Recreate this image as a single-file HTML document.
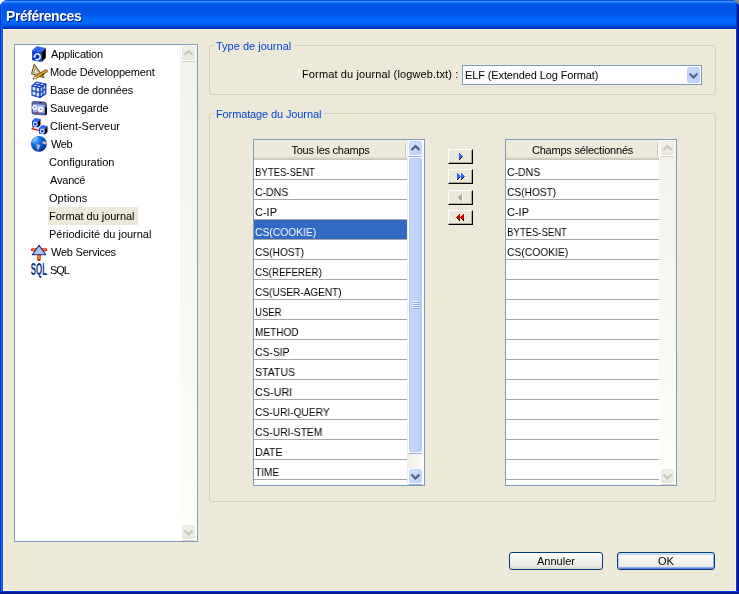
<!DOCTYPE html>
<html><head><meta charset="utf-8">
<style>
html,body{margin:0;padding:0;width:739px;height:594px;overflow:hidden;background:#fff;}
*{box-sizing:border-box;}
body{font-family:"Liberation Sans",sans-serif;font-size:11px;color:#000;position:relative;}
.a{position:absolute;}
.t,.ti,.rt,.glbl{will-change:transform;}
.t{position:absolute;white-space:nowrap;line-height:13px;}
#corner{left:729px;top:0;width:10px;height:10px;background:#8c8a7e;}
#win{left:0;top:0;width:739px;height:594px;border-radius:8px 8px 0 0;overflow:hidden;background:#0831d9;}
#title{left:0;top:0;width:739px;height:29px;
background:linear-gradient(180deg,#0a4fe4 0px,#0a4fe4 1px,#3d92ff 1px,#3d92ff 2px,#1b7bff 2px,#1b7bff 3px,#0066f5 3px,#005ceb 4px,#0055e5 5px,#0053e3 9px,#0056e6 14px,#005cf0 16px,#0066fa 18px,#0068ff 19px,#0068ff 23px,#0062f5 24px,#005aee 25px,#004cdc 26px,#003cc8 27px,#0032b8 28px,#0032b8 29px);}
#fl{left:0;top:4px;width:3px;height:590px;box-shadow:inset 1px 0 #0831d9,inset 2px 0 #166aee;background:#0855dd;}
#fr{left:736px;top:4px;width:3px;height:590px;background:#001ea0;box-shadow:inset -1px 0 #00138c,inset 1px 0 #003bda;}
#fb{left:0;top:591px;width:739px;height:3px;background:#001ea0;box-shadow:inset 0 -1px #00138c,inset 0 1px #003bda;}
#client{left:3px;top:29px;width:733px;height:562px;background:#ece9d8;border:1px solid #fcf5da;}
#ttxt{left:6px;top:8px;font-weight:bold;font-size:14px;letter-spacing:-0.45px;line-height:16px;color:#fff;text-shadow:1px 1px #0a1a80;}
.box{position:absolute;background:#fff;border:1px solid #7f9db9;}
.grp{position:absolute;border:1px solid #d0d0bf;border-radius:3px;}
.glbl{position:absolute;color:#0046d5;background:#ece9d8;padding:0 3px 0 2px;line-height:13px;white-space:nowrap;}
.ti{position:absolute;line-height:13px;white-space:nowrap;}
.ic{position:absolute;left:31px;width:16px;height:16px;}
.hdr{position:absolute;height:20px;background:linear-gradient(180deg,#ebeadb 0,#ebeadb 17px,#e2decd 17px,#e2decd 18px,#d6d2c2 18px,#d6d2c2 19px,#cbc7b8 19px);}
.hsep{position:absolute;width:2px;height:13px;border-left:1px solid #c7c5b2;border-right:1px solid #fff;}
.row{position:absolute;height:20px;border-bottom:1px solid #a8a8a8;}
.rt{position:absolute;line-height:13px;white-space:nowrap;}
.sb{position:absolute;width:17px;}
.btn3d{position:absolute;width:25px;height:15px;background:#ece9d8;border-left:1px solid #fff;border-top:1px solid #fff;border-right:1px solid #000;border-bottom:1px solid #000;box-shadow:inset -1px -1px #aca899;}
.xpbtn{position:absolute;height:18px;border:1px solid #003c74;border-radius:3px;background:linear-gradient(180deg,#fff 0%,#f4f4f0 40%,#ecebe6 80%,#d6d0c5 100%);}
.xpbtn.def{box-shadow:inset 0 1px #cee7ff,inset 0 2px #bcd4f6,inset 1px 0 #bcd4f6,inset -1px 0 #89adf4,inset 0 -1px #6982ee,inset 0 -2px #89adf4;}
</style></head><body>
<div class="a" id="corner"></div>
<div class="a" id="win">
  <div class="a" id="title"></div>
  <div class="a" id="fl"></div>
  <div class="a" id="fr"></div>
  <div class="a" id="fb"></div>
  <div class="a" id="client"></div>
  <div class="t" id="ttxt">Préférences</div>
</div>
<div class="box" style="left:14px;top:44px;width:184px;height:498px;"></div>
<div class="ti" style="left:51px;top:48px;letter-spacing:-0.18px">Application</div>
<div class="a" style="left:30px;top:45px;width:18px;height:18px"><svg width="18" height="18"><polygon points="2.1,5.2 6.7,1.2 15.8,3 11.8,7.3" fill="#2a66ee"/><polygon points="2.1,5.2 11.8,7.3 11.8,17 2.1,15.2" fill="#0f3ed4"/><polygon points="11.8,7.3 15.8,3 15.8,12.7 11.8,17" fill="#000"/><path d="M4.5 11 A2.9 2.9 0 1 1 5.6 14.1" fill="none" stroke="#eef2ff" stroke-width="1.5"/><path d="M2.8 11.6 L5.6 10.4 L5.4 13 Z" fill="#eef2ff"/><circle cx="7.6" cy="12" r="1.3" fill="#0a2cb8"/></svg></div>
<div class="ti" style="left:50px;top:66px;letter-spacing:-0.17px">Mode Développement</div>
<div class="a" style="left:30px;top:63px;width:18px;height:18px"><svg width="18" height="18"><polygon points="4.2,1.4 1.5,10.8 14,14.6" fill="#d8cc98" stroke="#7a6a30" stroke-width="1.2" stroke-linejoin="round"/><polygon points="4.9,5.6 3.8,9.7 9.6,11.3" fill="#fff" stroke="#a89860" stroke-width="0.9"/><path d="M5.6 14.4 L16 8" stroke="#7a4c08" stroke-width="3.4" stroke-linecap="round"/><path d="M5.8 14.2 L15.9 8.1" stroke="#e8a030" stroke-width="1.9" stroke-linecap="round"/><path d="M3.6 15.8 L5.8 14.2" stroke="#e8e0c0" stroke-width="1.8"/><path d="M3 16.3 L4.2 15.4" stroke="#404040" stroke-width="1.4"/><rect x="12.6" y="10.8" width="1.4" height="1.4" fill="#000"/></svg></div>
<div class="ti" style="left:50px;top:84px;letter-spacing:-0.17px">Base de données</div>
<div class="a" style="left:30px;top:81px;width:18px;height:18px"><svg width="18" height="18"><polygon points="2,5 6.5,1 15.8,3 10,6.8" fill="#c4e0f0" stroke="#1a44d0" stroke-width="1.2" stroke-linejoin="round"/><polygon points="2,5 10,6.8 10,16.5 2,14.2" fill="#d4ecf4" stroke="#1a44d0" stroke-width="1.2" stroke-linejoin="round"/><polygon points="10,6.8 15.8,3 15.8,12.7 10,16.5" fill="#a8cce8" stroke="#1030b8" stroke-width="1.2" stroke-linejoin="round"/><path d="M6 5.9 L6 15.35 M2 9.6 L10 11.65 M12.9 4.9 L12.9 14.6 M10 11.65 L15.8 7.85 M4.25 3 L12.9 4.9 M11.15 2 L6 5.9" stroke="#1a44d0" stroke-width="1.2" fill="none"/></svg></div>
<div class="ti" style="left:50px;top:102px;letter-spacing:-0.08px">Sauvegarde</div>
<div class="a" style="left:30px;top:99px;width:18px;height:18px"><svg width="18" height="18"><path d="M2 4 Q2 2.5 3.5 2.5 L14 3 Q16.5 3.2 16.5 6 L16.5 14.5 Q16.5 16 15 16 L3.5 15.2 Q2 15 2 13.5 Z" fill="#5866a8" stroke="#3a4680" stroke-width="0.8"/><path d="M3 5 L14.5 6 L14.5 14 L3 13 Z" fill="#9ab4ec"/><circle cx="4.6" cy="8.6" r="2.5" fill="#f4f6ff"/><circle cx="4.6" cy="8.6" r="0.8" fill="#5866a8"/><circle cx="10.6" cy="10.2" r="2.8" fill="#f4f6ff"/><circle cx="10.6" cy="10.2" r="0.8" fill="#5866a8"/><rect x="6.3" y="12.6" width="1.6" height="1.4" fill="#d01818"/><rect x="15.2" y="8" width="1.6" height="7.6" fill="#000"/><rect x="9.4" y="3.2" width="2.2" height="0.9" fill="#000"/></svg></div>
<div class="ti" style="left:50px;top:120px;letter-spacing:-0.03px">Client-Serveur</div>
<div class="a" style="left:30px;top:117px;width:18px;height:18px"><svg width="18" height="18"><path d="M4.6 9.4 L2.2 11.6 L9.5 13.6" fill="none" stroke="#c01818" stroke-width="1.2"/><polygon points="2,4 5,1 10.5,2 8,5" fill="#2a66ee"/><polygon points="2,4 8,5 8,10.5 2,9.5" fill="#0f3ed4"/><polygon points="8,5 10.5,2 10.5,8 8,10.5" fill="#000"/><circle cx="5.2" cy="7.2" r="1.9" fill="none" stroke="#e8f0ff" stroke-width="1.1"/><rect x="4.8" y="6.6" width="1.1" height="1.1" fill="#1030c0"/><polygon points="9,11 12,8 17.5,9 15,12" fill="#2a66ee"/><polygon points="9,11 15,12 15,17.5 9,16.5" fill="#0f3ed4"/><polygon points="15,12 17.5,9 17.5,15 15,17.5" fill="#000"/><circle cx="12.2" cy="14.2" r="1.9" fill="none" stroke="#e8f0ff" stroke-width="1.1"/><rect x="11.8" y="13.6" width="1.1" height="1.1" fill="#1030c0"/></svg></div>
<div class="ti" style="left:51px;top:138px;letter-spacing:-0.4px">Web</div>
<div class="a" style="left:30px;top:135px;width:18px;height:18px"><svg width="18" height="18"><defs><radialGradient id="gl" cx="32%" cy="28%" r="78%"><stop offset="0" stop-color="#4cb0f4"/><stop offset="0.45" stop-color="#0c62dc"/><stop offset="0.85" stop-color="#0a3aa8"/><stop offset="1" stop-color="#08207a"/></radialGradient></defs><circle cx="8.9" cy="8.9" r="7.9" fill="url(#gl)"/><path d="M2.2 6.5 Q3 3 6 1.6 Q8.5 1.4 8 3.2 Q6.5 4.2 6.2 6 Q4.6 7.2 2.8 8.2 Z" fill="#8cc8ec" opacity="0.75"/><path d="M6.4 9.4 Q9 8.6 10.4 10.6 Q9.4 13 8.2 15.6 L7.2 14.2 Q6.2 11.6 6.4 9.4 Z" fill="#b0bcc8" opacity="0.9"/><path d="M12.4 6.4 Q14.6 5.6 16.4 7.2 L16.4 9.2 Q14.4 9.8 12.4 8.6 Z" fill="#e4bcb4" opacity="0.9"/><rect x="10.8" y="14.6" width="1.4" height="1.2" fill="#000"/></svg></div>
<div class="ti" style="left:49px;top:156px;letter-spacing:0px">Configuration</div>
<div class="ti" style="left:50px;top:174px;letter-spacing:-0.2px">Avancé</div>
<div class="ti" style="left:49px;top:192px;letter-spacing:0.05px">Options</div>
<div class="a" style="left:48px;top:207px;width:90px;height:18px;background:#ece9d8"></div>
<div class="ti" style="left:49px;top:210px;letter-spacing:-0.04px">Format du journal</div>
<div class="ti" style="left:49px;top:228px;letter-spacing:-0.015px">Périodicité du journal</div>
<div class="ti" style="left:51px;top:246px;letter-spacing:-0.23px">Web Services</div>
<div class="a" style="left:30px;top:243px;width:18px;height:18px"><svg width="18" height="18"><path d="M2.4 6.7 L15.8 6.7" stroke="#d02010" stroke-width="3" stroke-linecap="round"/><path d="M2.4 6.7 L15.8 6.7" stroke="#f8a030" stroke-width="1.2"/><path d="M9 12 L9 16.6" stroke="#d03010" stroke-width="3.4" stroke-linecap="round"/><path d="M9 12 L9 16" stroke="#f89020" stroke-width="1.6"/><polygon points="9,2.2 2.4,11.8 15.8,11.8" fill="#a8c4f8" stroke="#20286a" stroke-width="1.1" stroke-linejoin="round"/></svg></div>
<div class="ti" style="left:50px;top:264px;letter-spacing:-1.1px">SQL</div>
<div class="a" style="left:30px;top:261px;width:18px;height:18px"><svg width="18" height="18"><text x="0.8" y="13.7" font-family="Liberation Sans" font-weight="bold" font-size="16" textLength="16.2" lengthAdjust="spacingAndGlyphs" fill="#0a2f8a">SQL</text></svg></div>
<div class="a" style="left:180px;top:45px;width:17px;height:496px;background:linear-gradient(180deg,#f3f1ec,#fefefb)"></div>
<div class="a" style="left:181px;top:45px;width:15px;height:16px;background:#fff;border-radius:2px"></div>
<div class="a" style="left:182px;top:46px;width:13px;height:14px;border-radius:2px;border:1px solid #e8e6dc;background:linear-gradient(180deg,#f2f1ea,#e9e7de);"></div>
<div class="a" style="left:182px;top:61px;width:13px;height:1px;background:#d8d5c8"></div>
<svg class="a" style="left:180px;top:45px" width="17" height="17"><path d="M4.5 10 L8.5 6 L12.5 10" fill="none" stroke="#c9c7ba" stroke-width="2.2"/></svg>
<div class="a" style="left:181px;top:524px;width:15px;height:16px;background:#fff;border-radius:2px"></div>
<div class="a" style="left:182px;top:525px;width:13px;height:14px;border-radius:2px;border:1px solid #e8e6dc;background:linear-gradient(180deg,#f2f1ea,#e9e7de);"></div>
<div class="a" style="left:182px;top:540px;width:13px;height:1px;background:#d8d5c8"></div>
<svg class="a" style="left:180px;top:524px" width="17" height="17"><path d="M4.5 6.5 L8.5 10.5 L12.5 6.5" fill="none" stroke="#c9c7ba" stroke-width="2.2"/></svg>
<div class="grp" style="left:209px;top:45px;width:507px;height:50px;"></div>
<div class="glbl" style="left:214px;top:40px">Type de journal</div>
<div class="t" style="left:302px;top:68px;letter-spacing:0.13px">Format du journal (logweb.txt) :</div>
<div class="box" style="left:462px;top:65px;width:240px;height:20px;"></div>
<div class="t" style="left:465px;top:69px;letter-spacing:-0.12px">ELF (Extended Log Format)</div>
<div class="a" style="left:687px;top:67px;width:13px;height:16px;border-radius:2px;background:linear-gradient(135deg,#d2dcf8,#b8cdfb);border:1px solid #c3d3fd"></div>
<svg class="a" style="left:687px;top:67px" width="13" height="16"><path d="M2.5 6.5 L6.5 10.5 L10.5 6.5" fill="none" stroke="#4d6185" stroke-width="2"/></svg>
<div class="grp" style="left:209px;top:113px;width:507px;height:389px;"></div>
<div class="glbl" style="left:214px;top:108px;letter-spacing:-0.12px">Formatage du Journal</div>
<div class="box" style="left:253px;top:139px;width:172px;height:347px;overflow:hidden">
<div class="hdr" style="left:0;top:0;width:153px"></div>
<div class="t" style="left:0;top:4px;width:153px;text-align:center;letter-spacing:-0.25px;">Tous les champs</div>
<div class="hsep" style="left:151px;top:3px"></div>
<div class="row" style="left:0;top:20px;width:153px"></div>
<div class="rt" style="left:1px;top:26px;transform:scaleX(0.8657);transform-origin:1px 0;">BYTES-SENT</div>
<div class="row" style="left:0;top:40px;width:153px"></div>
<div class="rt" style="left:1px;top:46px;transform:scaleX(0.9531);transform-origin:1px 0;">C-DNS</div>
<div class="row" style="left:0;top:60px;width:153px"></div>
<div class="rt" style="left:1px;top:66px;">C-IP</div>
<div class="row" style="left:0;top:80px;width:153px"></div>
<div class="a" style="left:0;top:80px;width:153px;height:19px;background:#316ac5"></div>
<div class="rt" style="left:1px;top:86px;color:#fff;transform:scaleX(0.9349);transform-origin:1px 0;">CS(COOKIE)</div>
<div class="row" style="left:0;top:100px;width:153px"></div>
<div class="rt" style="left:1px;top:106px;transform:scaleX(0.9216);transform-origin:1px 0;">CS(HOST)</div>
<div class="row" style="left:0;top:120px;width:153px"></div>
<div class="rt" style="left:1px;top:126px;transform:scaleX(0.8877);transform-origin:1px 0;">CS(REFERER)</div>
<div class="row" style="left:0;top:140px;width:153px"></div>
<div class="rt" style="left:1px;top:146px;transform:scaleX(0.9130);transform-origin:1px 0;">CS(USER-AGENT)</div>
<div class="row" style="left:0;top:160px;width:153px"></div>
<div class="rt" style="left:1px;top:166px;transform:scaleX(0.8679);transform-origin:1px 0;">USER</div>
<div class="row" style="left:0;top:180px;width:153px"></div>
<div class="rt" style="left:1px;top:186px;transform:scaleX(0.9111);transform-origin:1px 0;">METHOD</div>
<div class="row" style="left:0;top:200px;width:153px"></div>
<div class="rt" style="left:1px;top:206px;transform:scaleX(0.9412);transform-origin:1px 0;">CS-SIP</div>
<div class="row" style="left:0;top:220px;width:153px"></div>
<div class="rt" style="left:1px;top:226px;transform:scaleX(0.9564);transform-origin:1px 0;">STATUS</div>
<div class="row" style="left:0;top:240px;width:153px"></div>
<div class="rt" style="left:1px;top:246px;transform:scaleX(0.9800);transform-origin:1px 0;">CS-URI</div>
<div class="row" style="left:0;top:260px;width:153px"></div>
<div class="rt" style="left:1px;top:266px;transform:scaleX(0.9256);transform-origin:1px 0;">CS-URI-QUERY</div>
<div class="row" style="left:0;top:280px;width:153px"></div>
<div class="rt" style="left:1px;top:286px;transform:scaleX(0.9319);transform-origin:1px 0;">CS-URI-STEM</div>
<div class="row" style="left:0;top:300px;width:153px"></div>
<div class="rt" style="left:1px;top:306px;transform:scaleX(0.9615);transform-origin:1px 0;">DATE</div>
<div class="row" style="left:0;top:320px;width:153px"></div>
<div class="rt" style="left:1px;top:326px;transform:scaleX(0.9120);transform-origin:1px 0;">TIME</div>
<div class="row" style="left:0;top:340px;width:153px"></div>
</div>
<div class="box" style="left:505px;top:139px;width:172px;height:347px;overflow:hidden">
<div class="hdr" style="left:0;top:0;width:153px"></div>
<div class="t" style="left:0;top:4px;width:153px;text-align:center;letter-spacing:-0.21px;">Champs sélectionnés</div>
<div class="hsep" style="left:151px;top:3px"></div>
<div class="row" style="left:0;top:20px;width:153px"></div>
<div class="rt" style="left:1px;top:26px;transform:scaleX(0.9531);transform-origin:1px 0;">C-DNS</div>
<div class="row" style="left:0;top:40px;width:153px"></div>
<div class="rt" style="left:1px;top:46px;transform:scaleX(0.9216);transform-origin:1px 0;">CS(HOST)</div>
<div class="row" style="left:0;top:60px;width:153px"></div>
<div class="rt" style="left:1px;top:66px;">C-IP</div>
<div class="row" style="left:0;top:80px;width:153px"></div>
<div class="rt" style="left:1px;top:86px;transform:scaleX(0.8657);transform-origin:1px 0;">BYTES-SENT</div>
<div class="row" style="left:0;top:100px;width:153px"></div>
<div class="rt" style="left:1px;top:106px;transform:scaleX(0.9349);transform-origin:1px 0;">CS(COOKIE)</div>
<div class="row" style="left:0;top:120px;width:153px"></div>
<div class="row" style="left:0;top:140px;width:153px"></div>
<div class="row" style="left:0;top:160px;width:153px"></div>
<div class="row" style="left:0;top:180px;width:153px"></div>
<div class="row" style="left:0;top:200px;width:153px"></div>
<div class="row" style="left:0;top:220px;width:153px"></div>
<div class="row" style="left:0;top:240px;width:153px"></div>
<div class="row" style="left:0;top:260px;width:153px"></div>
<div class="row" style="left:0;top:280px;width:153px"></div>
<div class="row" style="left:0;top:300px;width:153px"></div>
<div class="row" style="left:0;top:320px;width:153px"></div>
<div class="row" style="left:0;top:340px;width:153px"></div>
</div>
<div class="a" style="left:407px;top:140px;width:17px;height:345px;background:linear-gradient(90deg,#eeede5,#fefefb)"></div>
<div class="a" style="left:408px;top:140px;width:15px;height:16px;background:#fff;border-radius:2px"></div>
<div class="a" style="left:409px;top:141px;width:13px;height:14px;border-radius:2px;border:1px solid #c3d3fb;background:linear-gradient(135deg,#d4e0fc,#bccffb);"></div>
<div class="a" style="left:409px;top:156px;width:13px;height:1px;background:#8eaae8"></div>
<svg class="a" style="left:407px;top:140px" width="17" height="17"><path d="M4.5 10 L8.5 6 L12.5 10" fill="none" stroke="#4d6185" stroke-width="2.2"/></svg>
<div class="a" style="left:408px;top:468px;width:15px;height:16px;background:#fff;border-radius:2px"></div>
<div class="a" style="left:409px;top:469px;width:13px;height:14px;border-radius:2px;border:1px solid #c3d3fb;background:linear-gradient(135deg,#d4e0fc,#bccffb);"></div>
<div class="a" style="left:409px;top:484px;width:13px;height:1px;background:#8eaae8"></div>
<svg class="a" style="left:407px;top:468px" width="17" height="17"><path d="M4.5 6.5 L8.5 10.5 L12.5 6.5" fill="none" stroke="#4d6185" stroke-width="2.2"/></svg>
<div class="a" style="left:408px;top:157px;width:15px;height:296px;background:#fff;border-radius:2px"></div>
<div class="a" style="left:409px;top:158px;width:13px;height:294px;border-radius:2px;border:1px solid #b8c8f4;background:linear-gradient(90deg,#c8d4f8,#c4d4fc 50%,#b4ccf8);"></div>
<div class="a" style="left:409px;top:453px;width:13px;height:1px;background:#8eaae8"></div>
<div class="a" style="left:412px;top:301px;width:6px;height:1px;background:#eef4fe"></div>
<div class="a" style="left:413px;top:302px;width:6px;height:1px;background:#8cb0f8"></div>
<div class="a" style="left:412px;top:303px;width:6px;height:1px;background:#eef4fe"></div>
<div class="a" style="left:413px;top:304px;width:6px;height:1px;background:#8cb0f8"></div>
<div class="a" style="left:412px;top:305px;width:6px;height:1px;background:#eef4fe"></div>
<div class="a" style="left:413px;top:306px;width:6px;height:1px;background:#8cb0f8"></div>
<div class="a" style="left:412px;top:307px;width:6px;height:1px;background:#eef4fe"></div>
<div class="a" style="left:413px;top:308px;width:6px;height:1px;background:#8cb0f8"></div>
<div class="a" style="left:659px;top:140px;width:17px;height:345px;background:linear-gradient(180deg,#f3f1ec,#fefefb)"></div>
<div class="a" style="left:660px;top:140px;width:15px;height:16px;background:#fff;border-radius:2px"></div>
<div class="a" style="left:661px;top:141px;width:13px;height:14px;border-radius:2px;border:1px solid #e8e6dc;background:linear-gradient(180deg,#f2f1ea,#e9e7de);"></div>
<div class="a" style="left:661px;top:156px;width:13px;height:1px;background:#d8d5c8"></div>
<svg class="a" style="left:659px;top:140px" width="17" height="17"><path d="M4.5 10 L8.5 6 L12.5 10" fill="none" stroke="#c9c7ba" stroke-width="2.2"/></svg>
<div class="a" style="left:660px;top:468px;width:15px;height:16px;background:#fff;border-radius:2px"></div>
<div class="a" style="left:661px;top:469px;width:13px;height:14px;border-radius:2px;border:1px solid #e8e6dc;background:linear-gradient(180deg,#f2f1ea,#e9e7de);"></div>
<div class="a" style="left:661px;top:484px;width:13px;height:1px;background:#d8d5c8"></div>
<svg class="a" style="left:659px;top:468px" width="17" height="17"><path d="M4.5 6.5 L8.5 10.5 L12.5 6.5" fill="none" stroke="#c9c7ba" stroke-width="2.2"/></svg>
<div class="btn3d" style="left:448px;top:149px"></div>
<div class="btn3d" style="left:448px;top:169px"></div>
<div class="btn3d" style="left:448px;top:190px"></div>
<div class="btn3d" style="left:448px;top:210px"></div>
<svg class="a" style="left:448px;top:149px" width="25" height="15" shape-rendering="crispEdges"><rect x="11" y="4" width="1" height="1" fill="#3366ff"/><rect x="11" y="5" width="1" height="1" fill="#3366ff"/><rect x="12" y="5" width="1" height="1" fill="#3366ff"/><rect x="11" y="6" width="1" height="1" fill="#3366ff"/><rect x="12" y="6" width="1" height="1" fill="#3366ff"/><rect x="13" y="6" width="1" height="1" fill="#3366ff"/><rect x="11" y="7" width="1" height="1" fill="#3366ff"/><rect x="12" y="7" width="1" height="1" fill="#3366ff"/><rect x="13" y="7" width="1" height="1" fill="#3366ff"/><rect x="14" y="7" width="1" height="1" fill="#3366ff"/><rect x="11" y="8" width="1" height="1" fill="#3366ff"/><rect x="12" y="8" width="1" height="1" fill="#3366ff"/><rect x="13" y="8" width="1" height="1" fill="#000"/><rect x="11" y="9" width="1" height="1" fill="#3366ff"/><rect x="12" y="9" width="1" height="1" fill="#000"/><rect x="11" y="10" width="1" height="1" fill="#000"/></svg>
<svg class="a" style="left:448px;top:169px" width="25" height="15" shape-rendering="crispEdges"><rect x="9" y="4" width="1" height="1" fill="#3366ff"/><rect x="9" y="5" width="1" height="1" fill="#3366ff"/><rect x="10" y="5" width="1" height="1" fill="#3366ff"/><rect x="9" y="6" width="1" height="1" fill="#3366ff"/><rect x="10" y="6" width="1" height="1" fill="#3366ff"/><rect x="11" y="6" width="1" height="1" fill="#3366ff"/><rect x="9" y="7" width="1" height="1" fill="#3366ff"/><rect x="10" y="7" width="1" height="1" fill="#3366ff"/><rect x="11" y="7" width="1" height="1" fill="#3366ff"/><rect x="12" y="7" width="1" height="1" fill="#3366ff"/><rect x="9" y="8" width="1" height="1" fill="#3366ff"/><rect x="10" y="8" width="1" height="1" fill="#3366ff"/><rect x="11" y="8" width="1" height="1" fill="#000"/><rect x="9" y="9" width="1" height="1" fill="#3366ff"/><rect x="10" y="9" width="1" height="1" fill="#000"/><rect x="9" y="10" width="1" height="1" fill="#000"/><rect x="13" y="4" width="1" height="1" fill="#3366ff"/><rect x="13" y="5" width="1" height="1" fill="#3366ff"/><rect x="14" y="5" width="1" height="1" fill="#3366ff"/><rect x="13" y="6" width="1" height="1" fill="#3366ff"/><rect x="14" y="6" width="1" height="1" fill="#3366ff"/><rect x="15" y="6" width="1" height="1" fill="#3366ff"/><rect x="13" y="7" width="1" height="1" fill="#3366ff"/><rect x="14" y="7" width="1" height="1" fill="#3366ff"/><rect x="15" y="7" width="1" height="1" fill="#3366ff"/><rect x="16" y="7" width="1" height="1" fill="#3366ff"/><rect x="13" y="8" width="1" height="1" fill="#3366ff"/><rect x="14" y="8" width="1" height="1" fill="#3366ff"/><rect x="15" y="8" width="1" height="1" fill="#000"/><rect x="13" y="9" width="1" height="1" fill="#3366ff"/><rect x="14" y="9" width="1" height="1" fill="#000"/><rect x="13" y="10" width="1" height="1" fill="#000"/></svg>
<svg class="a" style="left:448px;top:190px" width="25" height="15" shape-rendering="crispEdges"><rect x="13" y="4" width="1" height="1" fill="#aca899"/><rect x="12" y="5" width="1" height="1" fill="#aca899"/><rect x="13" y="5" width="1" height="1" fill="#aca899"/><rect x="11" y="6" width="1" height="1" fill="#aca899"/><rect x="12" y="6" width="1" height="1" fill="#aca899"/><rect x="13" y="6" width="1" height="1" fill="#aca899"/><rect x="10" y="7" width="1" height="1" fill="#aca899"/><rect x="11" y="7" width="1" height="1" fill="#aca899"/><rect x="12" y="7" width="1" height="1" fill="#aca899"/><rect x="13" y="7" width="1" height="1" fill="#aca899"/><rect x="11" y="8" width="1" height="1" fill="#aca899"/><rect x="12" y="8" width="1" height="1" fill="#aca899"/><rect x="13" y="8" width="1" height="1" fill="#aca899"/><rect x="12" y="9" width="1" height="1" fill="#aca899"/><rect x="13" y="9" width="1" height="1" fill="#aca899"/><rect x="13" y="10" width="1" height="1" fill="#aca899"/><rect x="14" y="4" width="1" height="7" fill="#fff"/></svg>
<svg class="a" style="left:448px;top:210px" width="25" height="15" shape-rendering="crispEdges"><rect x="11" y="4" width="1" height="1" fill="#cc0000"/><rect x="10" y="5" width="1" height="1" fill="#cc0000"/><rect x="11" y="5" width="1" height="1" fill="#cc0000"/><rect x="9" y="6" width="1" height="1" fill="#cc0000"/><rect x="10" y="6" width="1" height="1" fill="#cc0000"/><rect x="11" y="6" width="1" height="1" fill="#cc0000"/><rect x="8" y="7" width="1" height="1" fill="#cc0000"/><rect x="9" y="7" width="1" height="1" fill="#cc0000"/><rect x="10" y="7" width="1" height="1" fill="#cc0000"/><rect x="11" y="7" width="1" height="1" fill="#cc0000"/><rect x="9" y="8" width="1" height="1" fill="#000"/><rect x="10" y="8" width="1" height="1" fill="#cc0000"/><rect x="11" y="8" width="1" height="1" fill="#cc0000"/><rect x="10" y="9" width="1" height="1" fill="#000"/><rect x="11" y="9" width="1" height="1" fill="#cc0000"/><rect x="11" y="10" width="1" height="1" fill="#000"/><rect x="15" y="4" width="1" height="1" fill="#cc0000"/><rect x="14" y="5" width="1" height="1" fill="#cc0000"/><rect x="15" y="5" width="1" height="1" fill="#cc0000"/><rect x="13" y="6" width="1" height="1" fill="#cc0000"/><rect x="14" y="6" width="1" height="1" fill="#cc0000"/><rect x="15" y="6" width="1" height="1" fill="#cc0000"/><rect x="12" y="7" width="1" height="1" fill="#cc0000"/><rect x="13" y="7" width="1" height="1" fill="#cc0000"/><rect x="14" y="7" width="1" height="1" fill="#cc0000"/><rect x="15" y="7" width="1" height="1" fill="#cc0000"/><rect x="13" y="8" width="1" height="1" fill="#000"/><rect x="14" y="8" width="1" height="1" fill="#cc0000"/><rect x="15" y="8" width="1" height="1" fill="#cc0000"/><rect x="14" y="9" width="1" height="1" fill="#000"/><rect x="15" y="9" width="1" height="1" fill="#cc0000"/><rect x="15" y="10" width="1" height="1" fill="#000"/></svg>
<div class="xpbtn" style="left:509px;top:552px;width:94px"></div>
<div class="t" style="left:509px;top:555px;width:94px;text-align:center">Annuler</div>
<div class="xpbtn def" style="left:617px;top:552px;width:98px"></div>
<div class="t" style="left:617px;top:555px;width:98px;text-align:center">OK</div>
</body></html>
